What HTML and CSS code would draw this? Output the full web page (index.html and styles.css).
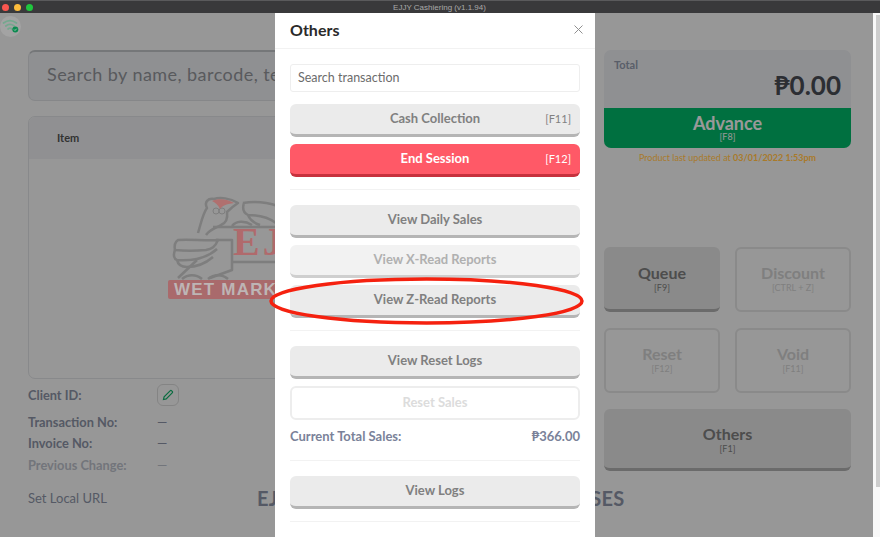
FILE: index.html
```html
<!DOCTYPE html>
<html lang="en">
<head>
    <meta charset="UTF-8">
    <meta name="viewport" content="width=device-width, initial-scale=1.0">
    <title>EJJY Cashiering</title>
    <link rel="stylesheet" href="styles.css">
</head>
<body>
    <div class="titlebar">
        <span class="light light-red"></span>
        <span class="light light-yellow"></span>
        <span class="light light-green"></span>
        <span class="titlebar-text">EJJY Cashiering (v1.1.94)</span>
    </div>

    <div class="app">
        <div class="topbar">
            <div class="wifi">
                <svg width="20" height="20" viewBox="0 0 20 20">
                    <path d="M2.500 6C6.500 3 11.500 3 15.500 6M4.800 9C7.500 7 10.500 7 13.200 9M7 12C8.300 11 9.700 11 11 12" fill="none" stroke="#74a88e" stroke-width="1.700" stroke-linecap="round"/>
                    <circle cx="14.300" cy="12.500" r="3" fill="#0b8a50"/>
                    <path d="M13 12.500l1 1 1.700-1.800" fill="none" stroke="#b9d2c5" stroke-width="0.800"/>
                </svg>
            </div>
        </div>

        <div class="layout">
            <div class="left">
                <div class="search-main">Search by name, barcode, textcode</div>
                <div class="table">
                    <div class="table-head">Item</div>
                    <div class="table-body">
                        <svg class="logo" width="290" height="106" viewBox="0 0 290 106">
                            <g fill="none" stroke="#7e7e7e" stroke-width="2.500" stroke-linejoin="round">
                                <!-- rooster head and neck -->
                                <path d="M30 38C33 28 35 18 39 13C36 7 40 3 46 4C52 2 62 3 70 8C64 12 62 14 59 17C60 24 58 28 53 30C48 33 42 34 38 40"/>
                                <!-- left wing feathers -->
                                <path d="M10 45C22 44 38 46 50 45C47 52 44 54 38 55C28 56 16 56 7 55C6 50 7 47 10 45Z"/>
                                <path d="M7 55C5 60 6 64 9 65C22 66 38 64 49 54M9 65C10 70 14 72 19 72C30 72 38 68 45 62"/>
                                <!-- box steps -->
                                <path d="M45 32L290 32M48 45L64 45L64 67L290 67M10 83L29 65M64 67L64 75L42 83"/>
                                <!-- right wing -->
                                <path d="M75 8C88 6 98 7 110 11M76 8C74 14 76 18 80 20C90 20 100 22 108 28M80 20C82 25 86 28 92 30M64 31C68 26 76 25 84 30"/>
                                <!-- feet -->
                                <path d="M14 84C20 79 28 79 34 84M40 84C46 79 54 79 60 84"/>
                            </g>
                            <circle cx="48" cy="16" r="3" fill="none" stroke="#7e7e7e" stroke-width="1"/>
                            <circle cx="54" cy="16" r="3" fill="none" stroke="#7e7e7e" stroke-width="1"/>
                            <path d="M44 6C50 3 60 4 66 8C58 9 54 11 52 14C50 10 48 8 44 6Z" fill="#b0706f"/>
                            <text x="65" y="60" class="logo-big">EJJY</text>
                            <rect x="0" y="85" width="290" height="19" rx="2" fill="#a96a6c"/>
                            <text x="6" y="100" class="logo-small">WET MARKET</text>
                        </svg>
                    </div>
                </div>
                <div class="info-row client-row">
                    <span class="info-label">Client ID:</span>
                    <span class="pencil-btn">
                        <svg width="12" height="12" viewBox="0 0 12 12">
                            <path d="M1.500 10.500l.6-2.700 6-6c.5-.5 1.100-.5 1.600 0l.5.5c.5.5.5 1.100 0 1.600l-6 6z" fill="none" stroke="#12b56c" stroke-width="1.200"/>
                        </svg>
                    </span>
                </div>
                <div class="info-row"><span class="info-label">Transaction No:</span><span class="info-dash">—</span></div>
                <div class="info-row"><span class="info-label">Invoice No:</span><span class="info-dash">—</span></div>
                <div class="info-row info-faded"><span class="info-label">Previous Change:</span><span class="info-dash">—</span></div>
            </div>

            <div class="right">
                <div class="total-card">
                    <div class="total-top">
                        <div class="total-label">Total</div>
                        <div class="total-amount">₱0.00</div>
                    </div>
                    <div class="advance">Advance<small>[F8]</small></div>
                </div>
                <div class="updated">Product last updated at <b>03/01/2022 1:53pm</b></div>
                <div class="actions">
                    <div class="action action-solid">Queue<small>[F9]</small></div>
                    <div class="action action-off">Discount<small>[CTRL + Z]</small></div>
                    <div class="action action-off">Reset<small>[F12]</small></div>
                    <div class="action action-off">Void<small>[F11]</small></div>
                    <div class="action action-solid action-wide">Others<small>[F1]</small></div>
                </div>
            </div>
        </div>

        <div class="footer">
            <span class="local-url">Set Local URL</span>
            <span class="company">EJJY WET MARKET AND ENTERPRISES</span>
        </div>

        <div class="mask"></div>
        <div class="scrollbar"><div class="scroll-thumb"></div></div>

        <div class="modal">
            <div class="modal-head">
                <span class="modal-title">Others</span>
                <svg class="modal-close" width="9" height="9" viewBox="0 0 9 9">
                    <path d="M.5.500l8 8M8.500.500l-8 8" stroke="#8f8f8f" stroke-width="1"/>
                </svg>
            </div>
            <div class="modal-body">
                <div class="search-input">Search transaction</div>
                <div class="btn">Cash Collection<span class="btn-key">[F11]</span></div>
                <div class="btn btn-red">End Session<span class="btn-key">[F12]</span></div>
                <div class="divider"></div>
                <div class="btn">View Daily Sales</div>
                <div class="btn btn-disabled">View X-Read Reports</div>
                <div class="btn">View Z-Read Reports</div>
                <div class="divider"></div>
                <div class="btn">View Reset Logs</div>
                <div class="btn btn-outline">Reset Sales</div>
                <div class="sales-row"><span>Current Total Sales:</span><span>₱366.00</span></div>
                <div class="divider divider-sales"></div>
                <div class="btn">View Logs</div>
                <div class="divider"></div>
            </div>
        </div>

        <svg class="circle-mark" width="320" height="52" viewBox="0 0 320 52">
            <ellipse cx="158.500" cy="26" rx="155.500" ry="22" fill="none" stroke="#f5210f" stroke-width="3.500"/>
        </svg>
    </div>
</body>
</html>
```

FILE: styles.css
```css
* {
    box-sizing: border-box;
}
html, body {
    margin: 0;
    height: 100%;
    overflow: hidden;
}
body {
    font-family: 'Lato', sans-serif;
    background: #fff;
    color: #555;
}
.titlebar {
    height: 13px;
    background: #39393b;
    border-top: 1px solid #5a5a5c;
    display: flex;
    align-items: center;
    padding-left: 2px;
    gap: 5px;
    position: relative;
}
.light {
    width: 7px;
    height: 7px;
    border-radius: 50%;
}
.light-red { background: #f9564f; }
.light-yellow { background: #fbbc3c; }
.light-green { background: #1fc63e; }
.titlebar-text {
    flex: 1;
    text-align: center;
    font-family: 'Liberation Sans', sans-serif;
    font-size: 8px;
    color: #a9a9a9;
    margin-right: 39px;
}

.app {
    position: relative;
    height: 524px;
    overflow: hidden;
    background: #fcfcfc;
}
.topbar {
    height: 37px;
    padding-top: 3px;
}
.wifi {
    position: relative;
    z-index: 1;
    width: 21px;
    height: 21px;
    border-radius: 50%;
    background: #a3a3a3;
    display: flex;
    align-items: center;
    justify-content: center;
}
.layout {
    display: flex;
    padding-left: 28px;
    gap: 14px;
}
.left {
    width: 562px;
    flex-shrink: 0;
}
.right {
    width: 247px;
}
.search-main {
    height: 51px;
    background: #eef0f3;
    border: 1px solid #dfe1e5;
    border-top: 2px solid #c4c6ca;
    border-radius: 7px;
    font-size: 18px;
    letter-spacing: .45px;
    line-height: 45px;
    padding-left: 18px;
    color: #94969c;
    white-space: nowrap;
    overflow: hidden;
}
.table {
    margin-top: 15px;
    height: 263px;
    border: 1px solid #e3e5e8;
    border-radius: 7px;
    display: flex;
    flex-direction: column;
    overflow: hidden;
}
.table-head {
    height: 42px;
    background: #f0f1f3;
    font-size: 11px;
    font-weight: 700;
    line-height: 42px;
    padding-left: 28px;
    color: #555;
}
.table-body {
    flex: 1;
    padding: 36px 0 0 139px;
}
.logo {
    display: block;
    position: relative;
    z-index: 1;
}
.logo-big {
    font-family: 'Liberation Serif', serif;
    font-size: 40px;
    font-weight: 700;
    letter-spacing: 3px;
    fill: #b06a6c;
}
.logo-small {
    font-family: 'Liberation Sans', sans-serif;
    font-size: 17px;
    font-weight: 700;
    letter-spacing: 1.200px;
    fill: #bdb5b5;
}
.info-row {
    display: flex;
    align-items: center;
    height: 21.500px;
    font-size: 12.800px;
    font-weight: 700;
    color: #8e95a8;
}
.info-label {
    width: 129px;
}
.info-dash {
    font-weight: 400;
    font-size: 13px;
}
.info-faded {
    opacity: .55;
}
.client-row {
    height: 22px;
    margin: 5px 0 5px;
}
.pencil-btn {
    width: 22px;
    height: 22px;
    border: 1px solid #dcdcdc;
    border-radius: 6px;
    display: flex;
    align-items: center;
    justify-content: center;
}

.total-card {
    height: 98px;
    border-radius: 7px;
    background: #eef0f3;
    overflow: hidden;
    display: flex;
    flex-direction: column;
}
.total-top {
    flex: 1;
    padding: 8px 10px 0;
}
.total-label {
    font-size: 11px;
    font-weight: 700;
    line-height: 13px;
    color: #959db0;
}
.total-amount {
    font-size: 26px;
    font-weight: 700;
    line-height: 29px;
    text-align: right;
    color: #4a4d55;
}
.advance {
    height: 40px;
    background: #00bb6b;
    color: #fff;
    text-align: center;
    font-size: 18px;
    font-weight: 700;
    line-height: 18px;
    padding-top: 6px;
}
.advance small, .action small {
    display: block;
    font-size: 9px;
    font-weight: 400;
    line-height: 9px;
}
.action small {
    margin-top: 2px;
}
.updated {
    position: relative;
    z-index: 1;
    text-align: center;
    font-size: 9px;
    line-height: 12px;
    margin-top: 4px;
    color: #a97a2a;
}
.actions {
    display: grid;
    grid-template-columns: 116px 116px;
    grid-auto-rows: 65px;
    justify-content: space-between;
    row-gap: 16px;
    margin-top: 83px;
}
.action {
    display: flex;
    flex-direction: column;
    align-items: center;
    justify-content: center;
    border-radius: 6px;
    font-size: 16px;
    font-weight: 700;
    line-height: 17px;
}
.action-solid {
    background: #e6e6e6;
    border-bottom: 3px solid #b3b3b3;
    color: #808080;
}
.action-off {
    border: 2px solid #e6e6e6;
    padding-bottom: 3px;
    color: #d4d4d4;
}
.action-wide {
    grid-column: 1 / 3;
    height: 62px;
}

.footer {
    position: relative;
    display: flex;
    align-items: center;
    margin-top: 10px;
    padding-left: 28px;
    font-size: 13px;
    color: #8e95a8;
}
.local-url {
    width: 229px;
}
.company {
    font-size: 20px;
    font-weight: 700;
    letter-spacing: .32px;
    white-space: nowrap;
}

/* dims everything behind the modal */
.mask {
    position: absolute;
    top: 0;
    bottom: 0;
    left: 0;
    right: 7px;
    background: rgba(0, 0, 0, .4);
}
.scrollbar {
    position: absolute;
    top: 0;
    bottom: 0;
    right: 0;
    width: 7px;
    background: #f8f8f8;
    padding: 2px 0 0 3px;
}
.scroll-thumb {
    height: 472px;
    background: #cdcdcd;
}
.modal {
    position: absolute;
    z-index: 2;
    left: 275px;
    top: 0;
    width: 320px;
    height: 560px;
    background: #fff;
}
.modal-head {
    height: 36px;
    display: flex;
    align-items: center;
    justify-content: space-between;
    padding: 0 12px 2px 15px;
    border-bottom: 1px solid #f2f2f2;
}
.modal-title {
    font-size: 16px;
    font-weight: 700;
    color: #2a2a2a;
}
.modal-body {
    padding: 15px 15px 0;
    display: flex;
    flex-direction: column;
}
.search-input {
    height: 28px;
    border: 1px solid #eeeeee;
    border-radius: 3px;
    font-size: 12.500px;
    line-height: 26px;
    padding-left: 7px;
    color: #6c6c6c;
    margin-bottom: 12px;
}
.btn {
    position: relative;
    height: 33px;
    margin-bottom: 7px;
    background: #ebebeb;
    border-bottom: 3px solid #b5b5b5;
    border-radius: 6px;
    text-align: center;
    font-size: 13px;
    font-weight: 700;
    line-height: 29px;
    color: #808080;
}
.btn-key {
    position: absolute;
    right: 9px;
    top: 0;
    font-weight: 400;
    font-size: 11px;
}
.btn-red {
    background: #ff5967;
    border-bottom-color: #c7313d;
    color: #fff;
    margin-bottom: 0;
}
.btn-disabled {
    background: #f2f2f2;
    border-bottom-color: #cfcfcf;
    color: #b0b0b0;
}
.btn-outline {
    background: #fff;
    border: 2px solid #ededed;
    height: 34px;
    color: #dcdcdc;
    margin-bottom: 0;
}
.divider {
    height: 1px;
    background: #f2f2f2;
    margin: 5px 0 15px;
}
.btn-red + .divider {
    margin-top: 12px;
}
.sales-row {
    display: flex;
    justify-content: space-between;
    font-size: 13px;
    font-weight: 700;
    line-height: 16px;
    color: #7a8299;
    margin-top: 8px;
}
.divider-sales {
    margin-top: 16px;
}

.circle-mark {
    position: absolute;
    z-index: 3;
    left: 268px;
    top: 262px;
}
```
